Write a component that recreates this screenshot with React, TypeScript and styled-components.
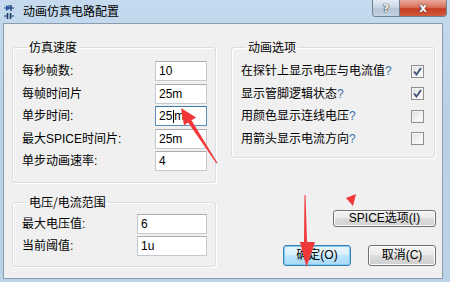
import styled, { createGlobalStyle } from "styled-components";

const Global = createGlobalStyle`
  html, body { margin: 0; padding: 0; background: #fff; }
  body { font-family: "Liberation Sans", "Noto Sans CJK SC", sans-serif; font-size: 12px; }
`;

const Window = styled.div`
  position: relative;
  width: 450px;
  height: 282px;
  box-sizing: border-box;
  display: flex;
  flex-direction: column;
  background: linear-gradient(180deg, #c5daee 0%, #b9d0e7 40%, #bcd2e8 100%);
  overflow: hidden;
`;

const TitleBar = styled.div`
  height: 23px;
  flex: none;
  display: flex;
  align-items: flex-start;
`;

const AppIcon = styled.svg`
  margin: 4px 0 0 3px;
  flex: none;
`;

const Title = styled.div`
  margin: 3px 0 0 8px;
  font-family: "Noto Sans CJK SC", sans-serif;
  font-size: 12px;
  line-height: 16px;
  color: #000;
  flex: 1;
`;

const CaptionButtons = styled.div`
  display: flex;
  margin-right: 3px;
  border: 1px solid #6d7f91;
  border-top: none;
  border-radius: 0 0 4px 4px;
  overflow: hidden;
`;

const CaptionButton = styled.div<{ $close?: boolean }>`
  width: ${(p) => (p.$close ? 46 : 26)}px;
  height: 16px;
  display: flex;
  align-items: center;
  justify-content: center;
  font-family: "DejaVu Sans", sans-serif;
  font-weight: bold;
  font-size: ${(p) => (p.$close ? 12 : 11)}px;
  color: #fff;
  text-shadow: 0 0 1px #333, 0 0 1px #333, 0 0 1px #333;
  background: ${(p) =>
    p.$close
      ? "linear-gradient(180deg, #e9a99b 0%, #d9725c 45%, #c63d24 55%, #d2593b 100%)"
      : "linear-gradient(180deg, #e4ecf4 0%, #c9d6e3 45%, #b3c4d6 55%, #c4d3e2 100%)"};
  border-left: ${(p) => (p.$close ? "1px solid #6d7f91" : "none")};
`;

const Client = styled.div`
  flex: 1;
  margin: 0 7px 3px 3px;
  border: 1px solid #8b9cad;
  background: #f0f0f0;
  display: grid;
  grid-template-columns: 204px 204px;
  column-gap: 15px;
  align-items: start;
  padding: 16px 7px 0 8px;
`;

const Column = styled.div`
  display: flex;
  flex-direction: column;
`;

const Group = styled.fieldset<{ $pt: number; $pb: number; $lx: number }>`
  margin: 0;
  padding: ${(p) => p.$pt}px 8px ${(p) => p.$pb}px 9px;
  border: 1px solid #d5dfe5;
  border-radius: 3px;
  box-shadow: inset 1px 1px 0 #fff, 1px 1px 0 #fff;
  min-width: 0;
  display: flex;
  flex-direction: column;
  & + & { margin-top: 12px; }
  legend {
    margin-left: ${(p) => p.$lx}px;
    padding: 0 2px;
    font-family: "Noto Sans CJK SC", sans-serif;
    font-size: 12px;
    line-height: 14px;
    color: #000;
  }
`;

const Rows = styled.div<{ $gap: number }>`
  display: flex;
  flex-direction: column;
  gap: ${(p) => p.$gap}px;
`;

const FieldRow = styled.div`
  height: 20px;
  display: flex;
  align-items: center;
  justify-content: space-between;
`;

const Label = styled.span`
  font-size: 12px;
  line-height: 14px;
  color: #000;
`;

const TextBox = styled.div<{ $w: number; $focus?: boolean }>`
  width: ${(p) => p.$w}px;
  height: 20px;
  box-sizing: border-box;
  background: #fff;
  border: 1px solid ${(p) => (p.$focus ? "#5b8fc0" : "#c5c9cf")};
  border-top-color: ${(p) => (p.$focus ? "#3d7bad" : "#abadb3")};
  padding: 0 3px;
  display: flex;
  align-items: center;
  font-size: 12px;
  color: #000;
`;

const Caret = styled.span`
  display: inline-block;
  width: 1px;
  height: 13px;
  background: #000;
  margin: 0 0 0 1px;
`;

const CheckRow = styled.div`
  height: 20px;
  display: flex;
  align-items: center;
  justify-content: space-between;
`;

const Q = styled.span`
  color: #3b6ea8;
`;

const Box = styled.div`
  width: 13px;
  height: 13px;
  box-sizing: border-box;
  border: 1px solid #8f8f8f;
  background: linear-gradient(135deg, #dcdcdc 0%, #f4f4f4 60%, #fdfdfd 100%);
  box-shadow: inset 0 0 0 1px #f4f4f4;
  margin-right: 2px;
  display: flex;
  align-items: center;
  justify-content: center;
`;

const Button = styled.div<{ $w: number; $h: number; $default?: boolean }>`
  width: ${(p) => p.$w}px;
  height: ${(p) => p.$h}px;
  box-sizing: border-box;
  border: 1px solid ${(p) => (p.$default ? "#3c7fb1" : "#707070")};
  border-radius: 3px;
  background: ${(p) =>
    p.$default
      ? "linear-gradient(180deg, #eaf6fd 0%, #d9f0fc 45%, #bee6fd 50%, #a7d9f5 100%)"
      : "linear-gradient(180deg, #f2f2f2 0%, #ebebeb 45%, #dddddd 50%, #cfcfcf 100%)"};
  box-shadow: inset 0 0 0 1px ${(p) => (p.$default ? "#7ecbf1" : "#fcfcfc")};
  display: flex;
  align-items: center;
  justify-content: center;
  font-size: 12px;
  line-height: 14px;
  color: #000;
`;

const SpiceWrap = styled.div`
  display: flex;
  justify-content: flex-end;
  margin: 52px -1px 0 0;
`;

const ActionRow = styled.div`
  display: flex;
  justify-content: flex-end;
  gap: 17px;
  margin: 18px -1px 0 0;
`;

const Overlay = styled.svg`
  position: absolute;
  left: 0;
  top: 0;
  pointer-events: none;
`;

const speed = [
  { label: "每秒帧数:", value: "10" },
  { label: "每帧时间片", value: "25m" },
  { label: "单步时间:", value: "25", caret: true },
  { label: "最大SPICE时间片:", value: "25m" },
  { label: "单步动画速率:", value: "4" },
];

const options = [
  { label: "在探针上显示电压与电流值", checked: true },
  { label: "显示管脚逻辑状态", checked: true },
  { label: "用颜色显示连线电压", checked: false },
  { label: "用箭头显示电流方向", checked: false },
];

const range = [
  { label: "最大电压值:", value: "6" },
  { label: "当前阈值:", value: "1u" },
];

const Check = () => (
  <svg width="9" height="9" viewBox="0 0 9 9">
    <path d="M1 4.5 L3.5 7.5 L8 1" fill="none" stroke="#3b4d78" strokeWidth="1.8" />
  </svg>
);

export default function App() {
  return (
    <>
      <Global />
      <Window>
        <TitleBar>
          <AppIcon width="12" height="16" viewBox="0 0 12 16">
            <path d="M1 4 H11 M6 1 V4" stroke="#1d3a6b" strokeWidth="1" />
            <path d="M3 1 L3 7 L8 4 Z" fill="#2a5aa8" />
            <path d="M8 1 V7" stroke="#1d3a6b" strokeWidth="1.4" />
            <path d="M1 12 H4.5 M7.5 12 H11" stroke="#1d3a6b" strokeWidth="1.2" />
            <path d="M4.5 9 V15 M7.5 9 V15" stroke="#1d3a6b" strokeWidth="1.6" />
          </AppIcon>
          <Title>动画仿真电路配置</Title>
          <CaptionButtons>
            <CaptionButton>?</CaptionButton>
            <CaptionButton $close>x</CaptionButton>
          </CaptionButtons>
        </TitleBar>
        <Client>
          <Column>
            <Group $pt={7} $pb={11} $lx={5}>
              <legend>仿真速度</legend>
              <Rows $gap={2.5}>
                {speed.map((r) => (
                  <FieldRow key={r.label}>
                    <Label>{r.label}</Label>
                    <TextBox $w={52} $focus={r.caret}>
                      {r.value}
                      {r.caret && (
                        <>
                          <Caret />m
                        </>
                      )}
                    </TextBox>
                  </FieldRow>
                ))}
              </Rows>
            </Group>
            <Group $pt={5} $pb={10} $lx={5}>
              <legend>电压/电流范围</legend>
              <Rows $gap={2}>
                {range.map((r) => (
                  <FieldRow key={r.label}>
                    <Label>{r.label}</Label>
                    <TextBox $w={70}>{r.value}</TextBox>
                  </FieldRow>
                ))}
              </Rows>
            </Group>
          </Column>
          <Column>
            <Group $pt={7} $pb={8} $lx={5}>
              <legend>动画选项</legend>
              <Rows $gap={2.67}>
                {options.map((o) => (
                  <CheckRow key={o.label}>
                    <Label>
                      {o.label}
                      <Q>?</Q>
                    </Label>
                    <Box>{o.checked && <Check />}</Box>
                  </CheckRow>
                ))}
              </Rows>
            </Group>
            <SpiceWrap>
              <Button $w={103} $h={17}>SPICE选项(I)</Button>
            </SpiceWrap>
            <ActionRow>
              <Button $w={68} $h={21} $default>确定(O)</Button>
              <Button $w={68} $h={21}>取消(C)</Button>
            </ActionRow>
          </Column>
        </Client>
        <Overlay width="450" height="282" viewBox="0 0 450 282">
          <polygon
            points="181,108 196,117.5 191.5,120.3 217.5,163 216.5,163.5 188.1,122.5 184,125.5"
            fill="#f0383a"
          />
          <polygon points="304.5,195 305.5,195 307,242 315,242 306.5,267 300,242 304,242" fill="#f0383a" />
          <polygon points="346,198 356,194 353,206" fill="#f0383a" />
        </Overlay>
      </Window>
    </>
  );
}
